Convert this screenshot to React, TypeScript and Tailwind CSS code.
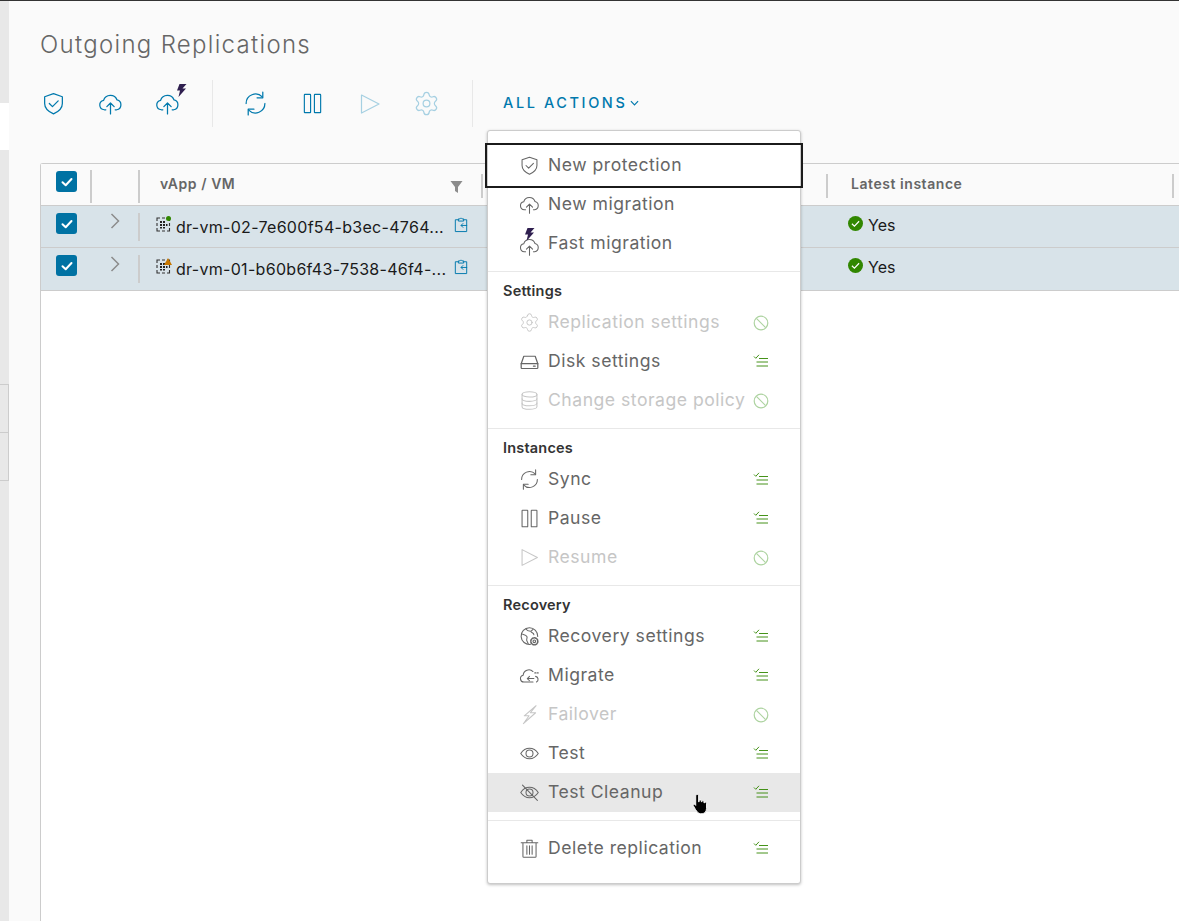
import type { ReactNode } from "react";
import { Settings } from "lucide-react";

type IconProps = { className?: string };

function Svg({ className, children, sw = 1.2 }: IconProps & { children: ReactNode; sw?: number }) {
  return (
    <svg viewBox="0 0 24 24" fill="none" stroke="currentColor" strokeWidth={sw} strokeLinecap="round" strokeLinejoin="round" className={className}>
      {children}
    </svg>
  );
}

const ShieldIcon = ({ className }: IconProps) => (
  <Svg className={className}>
    <path d="M12 2.500 20.500 5.500V12c0 4.600-3.600 7.800-8.500 10-4.900-2.200-8.500-5.400-8.500-10V5.500Z" />
    <path d="m8 12 3 3 5.500-5.500" />
  </Svg>
);

const CloudUpIcon = ({ className }: IconProps) => (
  <Svg className={className}>
    <path d="M7.500 18H6a4.600 4.600 0 0 1-.6-9.100A6.800 6.800 0 0 1 18.300 8.600 4.800 4.800 0 0 1 18 18h-1.500" />
    <path d="M12 22V11.500M8.500 15l3.500-3.500 3.500 3.500" />
  </Svg>
);

const SyncIcon = ({ className }: IconProps) => (
  <Svg className={className}>
    <path d="M3 12A9 9 0 0 1 18.500 5.700" />
    <path d="M19 1V6.500H13.500" />
    <path d="M21 12A9 9 0 0 1 5.500 18.300" />
    <path d="M5 23V17.500H10.500" />
  </Svg>
);

const PauseIcon = ({ className }: IconProps) => (
  <Svg className={className}>
    <rect x="3.500" y="2.500" width="6.500" height="19" rx="0.500" />
    <rect x="14" y="2.500" width="6.500" height="19" rx="0.500" />
  </Svg>
);

const PlayIcon = ({ className }: IconProps) => (
  <Svg className={className}>
    <path d="M3.500 3 21 12 3.500 21Z" />
  </Svg>
);

const GearIcon = ({ className }: IconProps) => <Settings className={className} strokeWidth={1.1} />;

const DiskIcon = ({ className }: IconProps) => (
  <Svg className={className} sw={1.4}>
    <path d="M2.500 14.500 5.500 6h13l3 8.500V19a1 1 0 0 1-1 1h-17a1 1 0 0 1-1-1Z" />
    <path d="M2.500 14.500h19M16.500 17.300h2" />
  </Svg>
);

const DbIcon = ({ className }: IconProps) => (
  <Svg className={className}>
    <ellipse cx="12" cy="5" rx="8.500" ry="3" />
    <path d="M3.500 5v14c0 1.700 3.800 3 8.500 3s8.500-1.300 8.500-3V5" />
    <path d="M3.500 10c0 1.700 3.800 3 8.500 3s8.500-1.300 8.500-3M3.500 15c0 1.700 3.800 3 8.500 3s8.500-1.300 8.500-3" />
  </Svg>
);

const GlobeGearIcon = ({ className }: IconProps) => (
  <Svg className={className}>
    <path d="M13 21A9.500 9.500 0 1 1 21.400 12" />
    <path d="M3 9c3 1 5 1 6 3s-1 3 0 5l1.500 3M8 3.500c1 2 3 2.500 5 2.500s2-2 3-2M14 7c1 1 3 1 3 3" />
    <circle cx="17.500" cy="17.500" r="1.500" />
    <circle cx="17.500" cy="17.500" r="4" strokeDasharray="1.800 1.300" strokeWidth="1.800" />
  </Svg>
);

const MigrateIcon = ({ className }: IconProps) => (
  <Svg className={className}>
    <path d="M16 19.500H5.500a4 4 0 0 1-.7-7.900A6.500 6.500 0 0 1 16 7.500" />
    <path d="M19 13a3.500 3.500 0 0 1 1 6.500" />
    <path d="M17 15.500H9.500M12 13l-2.500 2.500L12 18" />
    <path d="M18 9h1.500M21 9h1" />
  </Svg>
);

const BoltOutlineIcon = ({ className }: IconProps) => (
  <Svg className={className}>
    <path d="M19.500 2 6 13.500h5.500L5 22.500 19 10h-6Z" />
  </Svg>
);

const EyeIcon = ({ className }: IconProps) => (
  <Svg className={className}>
    <path d="M2 12c2.500-3.800 6-6 10-6s7.500 2.200 10 6c-2.500 3.800-6 6-10 6s-7.500-2.200-10-6Z" />
    <circle cx="12" cy="12" r="4" />
  </Svg>
);

const EyeOffIcon = ({ className }: IconProps) => (
  <Svg className={className}>
    <path d="M2 12c2.500-3.800 6-6 10-6s7.500 2.200 10 6c-2.500 3.800-6 6-10 6s-7.500-2.200-10-6Z" />
    <circle cx="12" cy="12" r="4" />
    <path d="M4 3.500 21 21" />
  </Svg>
);

const TrashIcon = ({ className }: IconProps) => (
  <Svg className={className}>
    <path d="M2.500 5.500h19M9 5.500V2.500h6v3M4.500 5.500V21a1 1 0 0 0 1 1h13a1 1 0 0 0 1-1V5.500" />
    <path d="M9 9v9.500M12 9v9.500M15 9v9.500" />
  </Svg>
);

const Bolt = ({ className }: IconProps) => (
  <svg viewBox="0 0 10 13" className={className} fill="#2f1f4f">
    <path d="M9.500 0 2.500 0 0 6.500h3L1.500 13 9 4.500H5.500Z" />
  </svg>
);

const ChecklistIcon = ({ className }: IconProps) => (
  <svg viewBox="0 0 16 16" fill="none" stroke="#318700" strokeWidth="0.900" className={className}>
    <path d="m1 3.500 1.800 1.800L6 1.800" />
    <path d="M6 5.500h9M3.500 9h11.500M3.500 13h11.500" />
  </svg>
);

const BanIcon = ({ className }: IconProps) => (
  <svg viewBox="0 0 16 16" fill="none" stroke="#add3a0" strokeWidth="1.200" className={className}>
    <circle cx="8" cy="8" r="6.800" />
    <path d="M3.400 3.400 12.600 12.600" />
  </svg>
);

function CheckBox() {
  return (
    <div className="flex h-[21px] w-[21px] items-center justify-center rounded-[3px] bg-[#0072a3]">
      <svg viewBox="0 0 12 12" fill="none" stroke="white" strokeWidth="2" strokeLinecap="round" strokeLinejoin="round" className="h-[12px] w-[12px]">
        <path d="M1.500 6.200 4.700 9.300 10.500 3" />
      </svg>
    </div>
  );
}

function VmIcon({ warn }: { warn?: boolean }) {
  return (
    <div className="relative h-[15px] w-[15px] shrink-0">
      <svg viewBox="0 0 15 15" className="h-[15px] w-[15px]" fill="none" stroke="#333" strokeWidth="1.100">
        <path d="M1 4V1h3M6 1h3M11 1h2.500v3M1 6v3M1 11v3h3M6 14h3M11 14h2.500v-3M13.500 6v3" />
        <path d="M4 4h2v2H4ZM7 4h2v2H7ZM10 7h1.500v2H10ZM4 7h2v2H4ZM7 7h2v2H7ZM4 10h2v1.500H4ZM7 10h2v1.500H7Z" fill="#222" stroke="none" />
      </svg>
      {warn ? (
        <svg viewBox="0 0 8 7" className="absolute -top-[1px] left-[8px] h-[7px] w-[8px]">
          <path d="M4 0 8 7H0Z" fill="#c77700" />
        </svg>
      ) : (
        <span className="absolute -top-[1px] left-[10px] h-[5px] w-[5px] rounded-full bg-[#318700]" />
      )}
    </div>
  );
}

function Row({ name, warn, tall }: { name: string; warn?: boolean; tall?: boolean }) {
  return (
    <div className={`flex border-b border-[#ccc] bg-[#d8e3e9] ${tall ? "h-[43px]" : "h-[42px]"}`}>
      <div className="flex w-[51px] shrink-0 pl-[15px] pt-[7px]">
        <CheckBox />
      </div>
      <div className={`flex w-[46px] shrink-0 justify-center text-[#8c8c8c] ${tall ? "pt-[8px]" : "pt-[7px]"}`}>
        <svg viewBox="0 0 10 16" fill="none" stroke="currentColor" strokeWidth="1.500" className="h-[16px] w-[10px]">
          <path d="M1.500 1 8.500 8 1.500 15" />
        </svg>
      </div>
      <div className="mt-[7px] h-[28px] w-[2px] shrink-0 bg-[#ccc]" />
      <div className="flex w-[343px] shrink-0 items-start gap-[5px] pl-[16px] pt-[11px]">
        <VmIcon warn={warn} />
        <span className="-mt-[2px] w-[270px] whitespace-nowrap text-[16px] leading-[24px] tracking-[0.300px] text-[#1a1a1a]">{name}</span>
        <svg viewBox="0 0 16 18" fill="none" stroke="#0079ad" strokeWidth="1.100" className="ml-[3px] h-[16px] w-[14px] shrink-0">
          <path d="M5 3H1.500v13.500h13V3H11" />
          <path d="M5 4.500V2h1.800a1.300 1.300 0 0 1 2.400 0H11v2.500Z" />
          <path d="M15 9.500H8M10.500 7 8 9.500l2.500 2.500" />
        </svg>
      </div>
      <div className="w-[346px] shrink-0" />
      <div className="flex items-start gap-[5px] pl-[19px] pt-[10px]">
        <div className="flex h-[15px] w-[15px] items-center justify-center rounded-full bg-[#318700]">
          <svg viewBox="0 0 10 10" fill="none" stroke="white" strokeWidth="1.300" className="h-[9px] w-[9px]">
            <path d="M1 5.300 3.800 8 9 2.500" />
          </svg>
        </div>
        <span className="-mt-[3px] text-[16px] leading-[24px] text-[#1a1a1a]">Yes</span>
      </div>
    </div>
  );
}

function ToolButton({ children }: { children: ReactNode }) {
  return <button className="relative flex h-[47px] w-[57px] shrink-0 items-center justify-center">{children}</button>;
}

type Item = {
  label: string;
  icon: ReactNode;
  disabled?: boolean;
  status?: "ok" | "ban";
  focus?: boolean;
  hover?: boolean;
};

const ic = "h-[21px] w-[21px]";

function MenuRow({ item }: { item: Item }) {
  return (
    <div
      className={`relative flex h-[39px] items-center pl-[31px] ${item.hover ? "bg-[#e8e8e8]" : ""} ${
        item.focus ? "z-10 outline-2 outline-offset-[1px] outline-[#1b1b1b]" : ""
      } ${item.disabled ? "text-[#c6c6c6]" : "text-[#666]"}`}
    >
      <span className="flex w-[29px] shrink-0 items-center">{item.icon}</span>
      <span className="-mt-[2px] text-[17.600px] leading-[24px] tracking-[0.500px] whitespace-nowrap">{item.label}</span>
      {item.status && (
        <span className={`absolute left-[265px] ${item.status === "ok" ? "top-[11px]" : "top-[12px]"}`}>
          {item.status === "ok" ? <ChecklistIcon className="h-[16px] w-[16px]" /> : <BanIcon className="h-[16px] w-[16px]" />}
        </span>
      )}
    </div>
  );
}

function Section({ title, items }: { title: string; items: Item[] }) {
  return (
    <div>
      <div className="mt-2 h-px bg-[#e8e8e8]" />
      <div className="mt-[6px] flex h-[25px] items-center pl-[15px] text-[14.500px] font-semibold tracking-[0.200px] text-[#333]">{title}</div>
      {items.map((item) => (
        <MenuRow key={item.label} item={item} />
      ))}
    </div>
  );
}

function ActionsMenu() {
  return (
    <div className="absolute left-[487px] top-[130px] z-20 w-[314px] rounded-[3px] border border-[#ccc] bg-white py-[15px] shadow-[0_1px_3px_rgba(0,0,0,0.25)]">
      <MenuRow item={{ label: "New protection", focus: true, icon: <ShieldIcon className={ic} /> }} />
      <MenuRow item={{ label: "New migration", icon: <CloudUpIcon className={ic} /> }} />
      <MenuRow
        item={{
          label: "Fast migration",
          icon: (
            <span className="relative block h-[21px] w-[21px]">
              <CloudUpIcon className="absolute left-0 top-[3px] h-[21px] w-[21px]" />
              <Bolt className="absolute left-[6px] -top-[5px] h-[13px] w-[10px]" />
            </span>
          ),
        }}
      />
      <Section
        title="Settings"
        items={[
          { label: "Replication settings", disabled: true, status: "ban", icon: <GearIcon className={ic} /> },
          { label: "Disk settings", status: "ok", icon: <DiskIcon className={ic} /> },
          { label: "Change storage policy", disabled: true, status: "ban", icon: <DbIcon className={ic} /> },
        ]}
      />
      <Section
        title="Instances"
        items={[
          { label: "Sync", status: "ok", icon: <SyncIcon className={ic} /> },
          { label: "Pause", status: "ok", icon: <PauseIcon className={ic} /> },
          { label: "Resume", disabled: true, status: "ban", icon: <PlayIcon className={ic} /> },
        ]}
      />
      <Section
        title="Recovery"
        items={[
          { label: "Recovery settings", status: "ok", icon: <GlobeGearIcon className={ic} /> },
          { label: "Migrate", status: "ok", icon: <MigrateIcon className={ic} /> },
          { label: "Failover", disabled: true, status: "ban", icon: <BoltOutlineIcon className={ic} /> },
          { label: "Test", status: "ok", icon: <EyeIcon className={ic} /> },
          { label: "Test Cleanup", status: "ok", hover: true, icon: <EyeOffIcon className={ic} /> },
        ]}
      />
      <div className="my-2 h-px bg-[#e8e8e8]" />
      <MenuRow item={{ label: "Delete replication", status: "ok", icon: <TrashIcon className={ic} /> }} />
    </div>
  );
}

export default function App() {
  return (
    <div className="relative h-[921px] w-[1179px] overflow-hidden bg-[#fafafa] font-['Inter',sans-serif]">
      <div className="h-px bg-[#333]" />
      <div className="flex h-[920px]">
        <aside className="flex w-[9px] shrink-0 flex-col bg-[#e8e8e8]">
          <div className="h-[102px]" />
          <div className="h-[47px] bg-white" />
          <div className="h-[234px]" />
          <div className="h-[49px] border-y border-r border-[#ccc]" />
          <div className="h-[48px] border-b border-r border-[#ccc]" />
        </aside>

        <main className="min-w-0 flex-1">
          <h1 className="mt-[29px] pl-[31px] text-[24px] font-light leading-[30px] tracking-[1.300px] text-[#666]">Outgoing Replications</h1>

          <div className="mt-[20px] flex h-[47px] items-center pl-[16px] text-[#0079ad]">
            <ToolButton>
              <ShieldIcon className="h-[25px] w-[25px]" />
            </ToolButton>
            <ToolButton>
              <CloudUpIcon className="h-[25px] w-[25px]" />
            </ToolButton>
            <ToolButton>
              <CloudUpIcon className="h-[25px] w-[25px]" />
              <Bolt className="absolute left-[38px] top-[4px] h-[13px] w-[10px]" />
            </ToolButton>
            <div className="ml-[16px] h-[47px] w-px bg-[#e8e8e8]" />
            <div className="ml-[14px] flex">
              <ToolButton>
                <SyncIcon className="h-[25px] w-[25px]" />
              </ToolButton>
              <ToolButton>
                <PauseIcon className="h-[23px] w-[23px]" />
              </ToolButton>
              <ToolButton>
                <PlayIcon className="h-[24px] w-[24px] text-[#a6d0e2]" />
              </ToolButton>
              <ToolButton>
                <GearIcon className="h-[27px] w-[27px] text-[#a6d0e2]" />
              </ToolButton>
            </div>
            <div className="ml-[17px] h-[47px] w-px bg-[#e8e8e8]" />
            <button className="mb-[2px] ml-[30px] flex items-center gap-[3px] text-[14.500px] font-medium tracking-[2.600px] text-[#0079ad]">
              ALL ACTIONS
              <svg viewBox="0 0 10 6" fill="none" stroke="currentColor" strokeWidth="1.300" className="h-[6px] w-[9px]">
                <path d="M1 1 5 5 9 1" />
              </svg>
            </button>
          </div>

          <div className="ml-[31px] mt-[36px] h-[800px] w-[1160px] rounded-tl-[3px] border-l border-t border-[#ccc] bg-white">
            <div className="flex h-[42px] border-b border-[#ccc] bg-[#fafafa]">
              <div className="flex w-[49px] shrink-0 pl-[15px] pt-[7px]">
                <CheckBox />
              </div>
              <div className="mt-[6px] h-[33px] w-[2px] shrink-0 bg-[#ccc]" />
              <div className="w-[46px] shrink-0" />
              <div className="mt-[6px] h-[33px] w-[2px] shrink-0 bg-[#ccc]" />
              <div className="flex w-[341px] shrink-0 justify-between pl-[20px] pr-[18px] pt-[9px] text-[14px] font-semibold tracking-[0.550px] text-[#666]">
                <span>vApp / VM</span>
                <svg viewBox="0 0 12 12" className="mt-[8px] h-[12px] w-[13px]" fill="#8c8c8c">
                  <path d="M0 0h12L7.500 6v6l-3-2V6Z" />
                </svg>
              </div>
              <div className="mt-[10px] h-[24px] w-[2px] shrink-0 bg-[#ccc]" />
              <div className="w-[343px] shrink-0" />
              <div className="mt-[10px] h-[24px] w-[2px] shrink-0 bg-[#ccc]" />
              <div className="w-[344px] shrink-0 pl-[23px] pt-[9px] text-[14px] font-semibold tracking-[0.550px] text-[#666]">Latest instance</div>
              <div className="mt-[10px] h-[24px] w-[2px] shrink-0 bg-[#ccc]" />
            </div>
            <Row name="dr-vm-02-7e600f54-b3ec-4764..." />
            <Row name="dr-vm-01-b60b6f43-7538-46f4-..." warn tall />
          </div>
        </main>
      </div>

      <ActionsMenu />

      <svg viewBox="0 0 16 20" className="absolute left-[692px] top-[793px] z-30 h-[22px] w-[18px]">
        <path
          d="M4.500 1.200c.8 0 1.300.6 1.300 1.300V8h.5V6.700c1-.6 1.800-.3 2 .4V8h.4v-.6c1-.5 1.800-.2 2 .5V9h.4v-.5c1-.4 1.900 0 1.900 1V14c0 2.500-1.500 4.800-4 4.800H7.500C5.500 18.800 4.500 17 3 15L1 11.500c-.5-1 .6-1.900 1.500-1L3.200 11.300V2.500c0-.7.600-1.300 1.300-1.300Z"
          fill="#000"
          stroke="#fff"
          strokeWidth="0.800"
        />
      </svg>
    </div>
  );
}
